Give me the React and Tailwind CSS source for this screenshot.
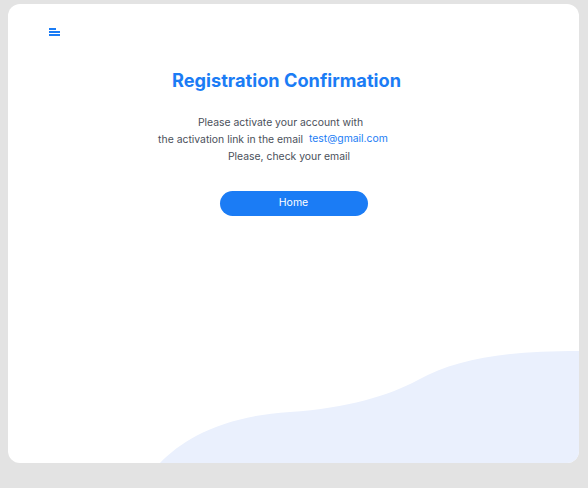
export default function App() {
  return (
    <div className="w-[588px] h-[488px] bg-[#e3e3e3] pl-[8px] pt-[4px]" style={{ fontFamily: "Inter, 'Open Sans', sans-serif" }}>
      <div className="relative w-[571px] h-[459px] bg-white rounded-[12px] overflow-hidden">
        <svg className="absolute left-0 bottom-0" width="571" height="459" viewBox="0 0 571 459">
          <path d="M152 459 C 175 435, 215 412, 282 408 C 340 404, 380 392, 410 376 C 450 354, 500 347, 571 347 L 571 459 Z" fill="#eaf0fd" />
        </svg>
        <div className="relative flex flex-col">
          <div className="pt-[24px] pl-[41px]">
            <div className="flex flex-col gap-[1px]">
              <div className="w-[7px] h-[2px] bg-[#1b7cf5]" />
              <div className="w-[11px] h-[2px] bg-[#1b7cf5]" />
              <div className="w-[11px] h-[2px] bg-[#1b7cf5]" />
            </div>
          </div>
          <h1 className="mt-[32px] text-center pr-[14px] text-[18.2px] leading-[24px] font-bold text-[#1b7cf5]">
            Registration Confirmation
          </h1>
          <div className="mt-[22px] text-[10.4px] text-[#4a4f5a] leading-[17px]">
            <p className="text-center pr-[26px]">Please activate your account with</p>
            <p className="text-center pr-[41px]">
              the activation link in the email <span className="ml-[3px] text-[#1b7cf5] relative top-[-1px]">test@gmail.com</span>
            </p>
            <p className="text-center pr-[9px]">Please, check your email</p>
          </div>
          <div className="mt-[26px] flex justify-center">
            <button className="w-[148px] h-[25px] rounded-full bg-[#1b7cf5] text-white text-[10.5px] leading-none">
              Home
            </button>
          </div>
        </div>
      </div>
    </div>
  );
}
